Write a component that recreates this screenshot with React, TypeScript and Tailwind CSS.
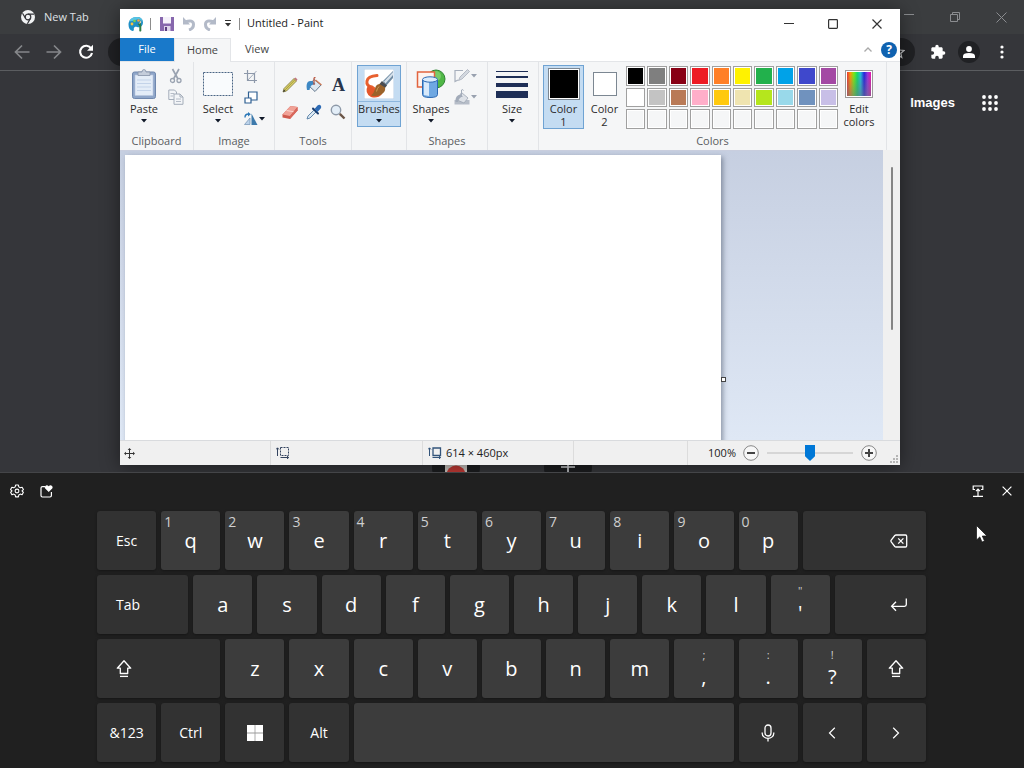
import { useState } from "react";
import type { ReactNode } from "react";

type KeyDef = {
  id: string;
  label?: ReactNode;
  hint?: string;
  top?: string;
  span?: string;
  kind?: "letter" | "fn" | "space" | "symbol";
  align?: "left" | "right";
};

const PALETTE = [
  "#000000", "#7f7f7f", "#880015", "#ed1c24", "#ff7f27", "#fff200", "#22b14c", "#00a2e8", "#3f48cc", "#a349a4",
  "#ffffff", "#c3c3c3", "#b97a57", "#ffaec9", "#ffc90e", "#efe4b0", "#b5e61d", "#99d9ea", "#7092be", "#c8bfe7",
  "", "", "", "", "", "", "", "", "", "",
];

/* ---------- small shared glyphs ---------- */

function DownArrow({ muted = false }: { muted?: boolean }) {
  return (
    <svg width="6" height="4" viewBox="0 0 6 4" className={muted ? "text-gray-400" : "text-gray-900"} aria-hidden="true">
      <path d="M0 0h6L3 3.5z" fill="currentColor" />
    </svg>
  );
}

function ShiftIcon() {
  return (
    <svg width="16" height="20" viewBox="0 0 16 20" fill="none" stroke="currentColor" strokeWidth="1.3" strokeLinejoin="round" aria-hidden="true">
      <path d="M8 1.7 1.3 9.2h3v5.3h7.4V9.2h3z" />
      <path d="M4 17.4h8" />
    </svg>
  );
}

function BackspaceIcon() {
  return (
    <svg width="18" height="14" viewBox="0 0 18 14" fill="none" stroke="currentColor" strokeWidth="1.3" strokeLinejoin="round" aria-hidden="true">
      <path d="M6 1h9.5q1.2 0 1.2 1.2v9.6q0 1.2-1.2 1.2H6q-.7 0-1.2-.5L1.2 7.8q-.6-.8 0-1.6l3.6-4.7Q5.3 1 6 1z" />
      <path d="m8.200 4.400 5.200 5.200M13.400 4.400 8.200 9.600" />
    </svg>
  );
}

function EnterIcon() {
  return (
    <svg width="18" height="14" viewBox="0 0 18 14" fill="none" stroke="currentColor" strokeWidth="1.3" aria-hidden="true">
      <path d="M16.300.5v6q0 1.800-1.800 1.800H2M6 3.800 1.600 8.300 6 12.800" />
    </svg>
  );
}

function WindowsIcon() {
  return (
    <svg width="16" height="16" viewBox="0 0 16 16" aria-hidden="true">
      <path d="M0 0h16v16H0z" fill="#9a9a9a" />
      <path d="M0 0h7.600v7.600H0zM8.400 0H16v7.600H8.400zM0 8.400h7.600V16H0zM8.400 8.400H16V16H8.400z" fill="#fff" />
    </svg>
  );
}

function MicIcon() {
  return (
    <svg width="14" height="18" viewBox="0 0 14 18" fill="none" stroke="currentColor" strokeWidth="1.3" aria-hidden="true">
      <rect x="4" y="1" width="6" height="11" rx="3" />
      <path d="M1.200 8.500v.7a5.800 5.200 0 0 0 11.600 0v-.7M7 14.400v3" />
    </svg>
  );
}

function Chevron({ flip = false }: { flip?: boolean }) {
  return (
    <svg width="8" height="12" viewBox="0 0 8 12" fill="none" stroke="currentColor" strokeWidth="1.2" aria-hidden="true">
      <path d={flip ? "M1.2.8 6.5 6l-5.3 5.2" : "M6.8.8 1.5 6l5.3 5.2"} />
    </svg>
  );
}

/* ---------- browser behind ---------- */

function ChromeLogo() {
  return (
    <svg width="14" height="14" viewBox="0 0 14 14" aria-hidden="true">
      <circle cx="7" cy="7" r="7" fill="#f1f3f4" />
      <circle cx="7" cy="7" r="2.8" fill="none" stroke="#35363a" strokeWidth="1.2" />
      <path d="M7 4.200h6.200M4.600 8.400 1.500 3.200M9.400 8.400 6.400 13.800" stroke="#35363a" strokeWidth="1.2" />
    </svg>
  );
}

function BrowserWindow() {
  return (
    <div className="flex h-full flex-col">
      <div className="flex h-[34px] shrink-0 items-center justify-between bg-[#3b3d3f]">
        <div className="flex h-full items-center gap-[9px] pl-[21px] text-[#dfe1e5]">
          <ChromeLogo />
          <span className="text-[11px]">New Tab</span>
        </div>
        <div className="flex h-[28px] items-center text-[#8b8d90]">
          <button type="button" aria-label="Minimize browser" className="flex w-[46px] justify-center">
            <svg width="10" height="10" viewBox="0 0 10 10" stroke="currentColor"><path d="M0 2.500h10" /></svg>
          </button>
          <button type="button" aria-label="Restore browser" className="flex w-[46px] justify-center">
            <svg width="10" height="10" viewBox="0 0 10 10" stroke="currentColor" fill="none"><path d="M.5 2.500h7v7h-7zM2.500 2.500v-2h7v7h-2" /></svg>
          </button>
          <button type="button" aria-label="Close browser" className="flex w-[46px] justify-center">
            <svg width="11" height="11" viewBox="0 0 11 11" stroke="currentColor"><path d="m.5.500 10 10m0-10-10 10" /></svg>
          </button>
        </div>
      </div>

      <div className="flex h-[37px] shrink-0 items-center border-b border-[#5b5d60] bg-[#35363a] px-3">
        <div className="flex items-center gap-4 pl-[2px] text-[#85878a]">
          <button type="button" aria-label="Back">
            <svg width="16" height="16" viewBox="0 0 16 16" fill="none" stroke="currentColor" strokeWidth="1.7"><path d="M15.500 8H2M8 1.500 1.500 8 8 14.500" /></svg>
          </button>
          <button type="button" aria-label="Forward">
            <svg width="16" height="16" viewBox="0 0 16 16" fill="none" stroke="currentColor" strokeWidth="1.7"><path d="M.5 8H14M8 1.500 14.500 8 8 14.500" /></svg>
          </button>
          <button type="button" aria-label="Reload" className="text-white">
            <svg width="16" height="16" viewBox="0 0 16 16" fill="none"><path d="M13.200 4.500A6 6 0 1 0 14 9" stroke="currentColor" strokeWidth="2.1" /><path d="M15 .8v6H9z" fill="currentColor" /></svg>
          </button>
        </div>
        <div className="ml-[14px] flex h-7 flex-1 items-center justify-end rounded-full bg-[#202124] pr-[10px]">
          <svg width="14" height="14" viewBox="0 0 14 14" fill="none" stroke="#c4c6c9" strokeWidth="1.2" aria-hidden="true">
            <path d="m7 1 1.800 4 4.300.4-3.300 2.900 1 4.300L7 10.300l-3.800 2.300 1-4.300L.9 5.400 5.200 5z" />
          </svg>
        </div>
        <div className="ml-[15px] flex items-center gap-3 text-white">
          <button type="button" aria-label="Extensions">
            <svg width="16" height="16" viewBox="0 0 24 24" fill="currentColor"><path d="M20.500 11H19V7c0-1.100-.9-2-2-2h-4V3.500a2.500 2.500 0 0 0-5 0V5H4c-1.100 0-2 .9-2 2v3.800h1.500a2.700 2.700 0 0 1 0 5.400H2V20c0 1.100.9 2 2 2h3.800v-1.500a2.700 2.700 0 0 1 5.400 0V22H17c1.100 0 2-.9 2-2v-4h1.500a2.500 2.500 0 0 0 0-5z" /></svg>
          </button>
          <button type="button" aria-label="Profile" className="flex size-[22px] items-center justify-center rounded-full bg-[#202124]">
            <svg width="12" height="12" viewBox="0 0 12 12" fill="currentColor"><circle cx="6" cy="3" r="2.9" /><path d="M0 12V10q0-3 6-3t6 3v2z" /></svg>
          </button>
          <button type="button" aria-label="Menu" className="flex w-5 justify-center">
            <svg width="4" height="14" viewBox="0 0 4 14" fill="currentColor"><circle cx="2" cy="2" r="1.6" /><circle cx="2" cy="7" r="1.6" /><circle cx="2" cy="12" r="1.6" /></svg>
          </button>
        </div>
      </div>

      <div className="flex min-h-0 flex-1 flex-col justify-between bg-[#35363a]">
        <div className="flex items-center justify-end gap-[27px] pr-[26px] pt-[23px] text-white">
          <a href="#images" className="font-['Liberation_Sans'] text-[13px] font-bold leading-[18px]">Images</a>
          <button type="button" aria-label="Apps">
            <svg width="16" height="16" viewBox="0 0 16 16" fill="currentColor">
              {[2, 8, 14].map((y) => [2, 8, 14].map((x) => <circle key={`${x}-${y}`} cx={x} cy={y} r="1.9" />))}
            </svg>
          </button>
        </div>
        <div className="flex h-[29px] items-start justify-center gap-16">
          <div className="flex size-12 items-center justify-center rounded-full bg-[#1c1d1f]">
            <svg width="22" height="22" viewBox="0 0 22 22" aria-hidden="true">
              <path d="M0 0h22v22H0z" fill="#c9c5c0" />
              <circle cx="11" cy="19" r="9.5" fill="#c23a35" />
              <circle cx="11" cy="20" r="4" fill="#e0805a" />
            </svg>
          </div>
          <div className="flex size-12 items-center justify-center rounded-full bg-[#1c1d1f]">
            <svg width="14" height="14" viewBox="0 0 14 14" stroke="#d5d7da" strokeWidth="1.6" aria-hidden="true"><path d="M0 7h14M7 0v14" /></svg>
          </div>
        </div>
      </div>
    </div>
  );
}

/* ---------- paint icons ---------- */

function PaintLogo() {
  return (
    <svg width="16" height="16" viewBox="0 0 16 16" aria-hidden="true">
      <path d="M9 1C4 1 .5 4.500.5 8.500.5 12 2 14.500 4.500 15c1.500.3 1.500-1.500 1.300-2.500C6 11 7.500 10.500 9 11c3 .8 6-.5 6-4.500C15 3 12.500 1 9 1z" fill="#1f8fc6" />
      <path d="M9 1C5 1 2.500 2.500 1.300 5c3 .8 5-1 7.700-1.500S13.500 4 15 6c-.3-3-2.500-5-6-5z" fill="#58c4e4" />
      <circle cx="4" cy="8" r="1.4" fill="#f6c343" />
      <circle cx="6.5" cy="5" r="1.3" fill="#7bd04b" />
      <circle cx="10.5" cy="4.5" r="1.3" fill="#f2a04b" />
      <path d="m9.500 8 3-1.500.8 3.500v5q-1 1-2 0V10z" fill="#2f7d46" />
      <path d="m10.800 8 2.300-1.200V4z" fill="#e6d5a8" />
    </svg>
  );
}

function PasteIcon() {
  return (
    <svg width="26" height="32" viewBox="0 0 26 32" aria-hidden="true">
      <rect x="1.500" y="4" width="23" height="26.500" rx="2" fill="#8fa6c9" stroke="#7088ae" />
      <path d="M4 7h18v20.500H4z" fill="#e4edf8" stroke="#b8c8de" strokeWidth=".6" />
      <path d="M6 12h14M6 15.500h14M6 19h14M6 22.500h14" stroke="#c3d3e9" />
      <path d="M7 7.500V4h4q0-2.500 2-2.500T15 4h4v3.500z" fill="#c4cddb" stroke="#8793a8" strokeWidth=".8" />
    </svg>
  );
}

function CutIcon() {
  return (
    <svg width="16" height="16" viewBox="0 0 16 16" fill="none" stroke="#9aa3b1" strokeWidth="1.3" aria-hidden="true">
      <path d="M4.500 1 10 11M11 1 5.500 11" strokeWidth="1.7" />
      <circle cx="4.500" cy="12.500" r="2" />
      <circle cx="11" cy="12.500" r="2" />
    </svg>
  );
}

function CopyIcon() {
  return (
    <svg width="16" height="16" viewBox="0 0 16 16" fill="#f3f5f8" stroke="#a4adba" aria-hidden="true">
      <path d="M.8 1h5.700l2 2v7.500H.8z" />
      <path d="M6 5h6l3 3v7.300H6zM12 5v3h3" />
      <path d="M8 10h5M8 12.500h5M2.500 4.500H6M2.500 7H5" strokeWidth=".8" />
    </svg>
  );
}

function SelectIcon() {
  return (
    <svg width="30" height="24" viewBox="0 0 30 24" aria-hidden="true">
      <rect x=".5" y=".5" width="29" height="23" fill="#f9fbfd" stroke="#4a6585" strokeDasharray="2 1" />
    </svg>
  );
}

function CropIcon() {
  return (
    <svg width="14" height="14" viewBox="0 0 14 14" fill="none" stroke="#8d98aa" strokeWidth="1.2" aria-hidden="true">
      <path d="M3.500 0v10.500H13M0 3.500h10.500V13" />
      <path d="M12.500 1 3.500 10.500" strokeWidth=".8" />
    </svg>
  );
}

function ResizeIcon() {
  return (
    <svg width="14" height="14" viewBox="0 0 14 14" fill="#fff" stroke="#2e5f92" strokeWidth="1.2" aria-hidden="true">
      <path d="M4.500 1h8.500v8H4.500z" />
      <path d="M1 7h6v5H1z" />
    </svg>
  );
}

function RotateIcon() {
  return (
    <svg width="14" height="14" viewBox="0 0 14 14" aria-hidden="true">
      <path d="M6 6v6.500H.5z" fill="#bcd3ea" stroke="#6f8fb3" strokeWidth=".7" />
      <path d="M7.500 1.500v11.500h6z" fill="#3d7aac" />
      <path d="M1 5.500Q1 2 4.500 2" fill="none" stroke="#2b78b8" strokeWidth="1.4" />
      <path d="M4 0v4.400l2.800-2.200z" fill="#2b78b8" />
    </svg>
  );
}

function PencilIcon() {
  return (
    <svg width="16" height="16" viewBox="0 0 16 16" aria-hidden="true">
      <path d="M1 15 2 11.500 12 1.500l2.500 2.500-10 10z" fill="#d8cf63" stroke="#7c7640" strokeWidth=".8" />
      <path d="m3.200 12.800 9.700-10" stroke="#a39a45" />
      <path d="m12 1.500 2.500 2.500 1-1.500-2-2z" fill="#c0777e" />
      <path d="m1 15 1-2.500 1.500 1.500z" fill="#333" />
    </svg>
  );
}

function BucketIcon() {
  return (
    <svg width="17" height="16" viewBox="0 0 17 16" aria-hidden="true">
      <path d="m8 2.500 7 5.500-6 6.500L3 9z" fill="#dfe8f1" stroke="#65798f" />
      <path d="M1 13Q-1 3 6 4l3.500 3Q4 7 3.500 13z" fill="#3d88c4" />
      <path d="M8 8V1.500Q8 .5 9.500.5" fill="none" stroke="#b8533c" strokeWidth="1.2" />
      <path d="m9.500 3 6 5" stroke="#d17b55" strokeWidth="1.3" />
    </svg>
  );
}

function EraserIcon() {
  return (
    <svg width="16" height="16" viewBox="0 0 16 16" aria-hidden="true">
      <path d="m.5 10.500 8-8.500 7 1v3.500L8 15l-7.500-1.500z" fill="#cf5a4e" />
      <path d="m.5 10.500 8-8.500 7 1-7.500 9z" fill="#f0a297" />
      <path d="m8 12 7.500-9v3.500L8 15z" fill="#d9675c" />
      <path d="m4.500 6.500 7 1.200" stroke="#fbd9d3" />
    </svg>
  );
}

function PickerIcon() {
  return (
    <svg width="16" height="16" viewBox="0 0 16 16" aria-hidden="true">
      <path d="m1 15 1-3 6-6 2 2-6 6z" fill="#dbe8f3" stroke="#567ea5" strokeWidth=".9" />
      <path d="m7 4.500 5 5" stroke="#1c3f70" strokeWidth="2" strokeLinecap="round" />
      <path d="m8.500 5 3-3.500q2-1.500 3.200 0t0 3L11.500 8z" fill="#2d6bb5" />
    </svg>
  );
}

function MagnifierIcon() {
  return (
    <svg width="16" height="16" viewBox="0 0 16 16" aria-hidden="true">
      <circle cx="6" cy="6" r="4.7" fill="#e3eef8" stroke="#8d99a8" strokeWidth="1.4" />
      <path d="m9.800 9.800 4.700 4.700" stroke="#6b5647" strokeWidth="2.4" />
    </svg>
  );
}

function BrushIcon() {
  return (
    <svg width="30" height="30" viewBox="0 0 30 30" aria-hidden="true">
      <path d="M0 0h30v30H0z" fill="#fff" stroke="#b8cfe6" />
      <path d="M13 6.500Q4 7 3 12t5 6q4 2 3 6" fill="none" stroke="#e8602f" strokeWidth="3" strokeLinecap="round" />
      <path d="M4 16q-4 8 3 12 7 2 11-3l-6-4z" fill="#e4572b" />
      <path d="m19 12 10-10v7l-7 8z" fill="#6f8ba3" />
      <path d="m20 12.500 9-9.500v3l-7.500 8.500z" fill="#d5e0ea" />
      <path d="m18 12 5 4.500-2.500 3-5.500-4z" fill="#4a4d52" />
      <path d="M15.500 15q-4 .5-4.500 5-1 4-4 6.500 7 1.500 11-1.500 4-3 3-6.500z" fill="#9b632b" />
      <path d="M15 17.500q-2 2-2.500 5" stroke="#cf9a57" fill="none" />
    </svg>
  );
}

function ShapesIcon() {
  return (
    <svg width="30" height="30" viewBox="0 0 30 30" aria-hidden="true">
      <circle cx="20" cy="10" r="9" fill="#4fb746" stroke="#2f8433" />
      <circle cx="20" cy="7" r="5" fill="#93db7f" opacity=".6" />
      <rect x="1.500" y="3" width="17" height="15" fill="#fdf3ef" stroke="#e2643f" strokeWidth="1.5" />
      <path d="M6.500 11v14.500q0 3 7.500 3t7.500-3V11z" fill="#6fa8e2" stroke="#2d69b2" />
      <path d="M8 13v13l5 1V13z" fill="#d7e9fb" />
      <ellipse cx="14" cy="10.500" rx="7.500" ry="2.700" fill="#d9ebfc" stroke="#2d69b2" />
    </svg>
  );
}

function OutlineIcon() {
  return (
    <svg width="16" height="14" viewBox="0 0 16 14" aria-hidden="true">
      <path d="M9 1.500H1v11L4 11" fill="none" stroke="#a8b0bd" strokeWidth="1.2" />
      <path d="M4.500 11.500 6 8l7.500-7.500 2 2L8 10z" fill="#d3d8df" stroke="#a0a8b5" strokeWidth=".7" />
    </svg>
  );
}

function FillIcon() {
  return (
    <svg width="16" height="16" viewBox="0 0 16 16" aria-hidden="true">
      <path d="M.5 11h15v4.500H.5z" fill="#b6bdc8" />
      <path d="m7.500 3.500 6.500 5.500-4 5-7-3z" fill="#dde1e7" stroke="#9ca5b2" strokeWidth=".8" />
      <path d="M1.500 13Q1 6 6.500 5.500L9 7.500Q5 8 4 13z" fill="#a2abb9" />
      <path d="M7.500 8V1q1.500-1 2 .5" fill="none" stroke="#a2abb9" />
    </svg>
  );
}

function SizeIcon() {
  return (
    <svg width="32" height="27" viewBox="0 0 32 27" fill="#1f2f57" aria-hidden="true">
      <path d="M0 0h32v1H0zM0 5h32v2H0zM0 12h32v4H0zM0 20h32v7H0z" />
    </svg>
  );
}

/* ---------- paint ribbon ---------- */

function RibbonGroup({ title, width, children }: { title: string; width: string; children: ReactNode }) {
  return (
    <section className={`flex shrink-0 flex-col border-r border-[#e2e4e7] pt-[3px] ${width}`}>
      <div className="flex h-[69px] pl-[2px]">{children}</div>
      <h2 className="text-center text-[11px] leading-[14px] text-[#5a5d61]">{title}</h2>
    </section>
  );
}

function BigButton({ icon, label, active = false }: { icon: ReactNode; label: string; active?: boolean }) {
  return (
    <button
      type="button"
      className={[
        "flex h-[62px] w-[44px] shrink-0 flex-col items-center border text-[11px] text-[#2b2b2b]",
        active ? "ml-[3px] border-[#6fa3d3] bg-[#c4dcf2]" : "border-transparent",
      ].join(" ")}
    >
      <span className={["flex h-9 w-full shrink-0 items-center justify-center", active ? "border-b border-[#8db6dd]" : ""].join(" ")}>{icon}</span>
      <span className="leading-[14px]">{label}</span>
      <span className="mt-[3px] flex"><DownArrow /></span>
    </button>
  );
}

function Ribbon() {
  const [slot, setSlot] = useState(1);

  return (
    <div className="flex h-[89px] shrink-0 overflow-hidden border-t border-[#e3e5e8] bg-[#f5f6f7]">
      <RibbonGroup title="Clipboard" width="w-[74px]">
        <BigButton label="Paste" icon={<PasteIcon />} />
        <div className="flex flex-col gap-[5px] pl-[2px] pt-[3px]">
          <button type="button" aria-label="Cut" className="flex"><CutIcon /></button>
          <button type="button" aria-label="Copy" className="flex"><CopyIcon /></button>
        </div>
      </RibbonGroup>

      <RibbonGroup title="Image" width="w-[81px]">
        <BigButton label="Select" icon={<SelectIcon />} />
        <div className="flex flex-col gap-[7px] pl-1 pt-[5px]">
          <button type="button" aria-label="Crop" className="flex"><CropIcon /></button>
          <button type="button" aria-label="Resize" className="flex"><ResizeIcon /></button>
          <button type="button" aria-label="Rotate" className="flex items-center gap-[1px]"><RotateIcon /><DownArrow /></button>
        </div>
      </RibbonGroup>

      <RibbonGroup title="Tools" width="w-[77px]">
        <div className="grid grid-cols-3 content-start gap-x-[7px] gap-y-[11px] pl-[5px] pt-3">
          <button type="button" aria-label="Pencil"><PencilIcon /></button>
          <button type="button" aria-label="Fill with color"><BucketIcon /></button>
          <button type="button" aria-label="Text" className="font-['Liberation_Serif'] text-[18px] font-bold leading-4 text-[#27354c]">A</button>
          <button type="button" aria-label="Eraser"><EraserIcon /></button>
          <button type="button" aria-label="Color picker"><PickerIcon /></button>
          <button type="button" aria-label="Magnifier"><MagnifierIcon /></button>
        </div>
      </RibbonGroup>

      <RibbonGroup title="" width="w-[55px]">
        <BigButton label="Brushes" icon={<BrushIcon />} active />
      </RibbonGroup>

      <RibbonGroup title="Shapes" width="w-[81px]">
        <BigButton label="Shapes" icon={<ShapesIcon />} />
        <div className="flex flex-col gap-[6px] pl-[1px] pt-1">
          <button type="button" aria-label="Outline" className="flex items-center gap-[1px]"><OutlineIcon /><DownArrow muted /></button>
          <button type="button" aria-label="Fill" className="flex items-center gap-[1px]"><FillIcon /><DownArrow muted /></button>
        </div>
      </RibbonGroup>

      <RibbonGroup title="" width="w-[51px]">
        <BigButton label="Size" icon={<SizeIcon />} />
      </RibbonGroup>

      <RibbonGroup title="Colors" width="w-[348px]">
        <div className="flex flex-1 items-start pl-[2px]">
          {[1, 2].map((n) => (
            <button
              key={n}
              type="button"
              onClick={() => setSlot(n)}
              className={[
                "flex h-16 w-[41px] shrink-0 flex-col items-center border text-[11px] leading-[13px] text-[#2b2b2b]",
                slot === n ? "border-[#6fa3d3] bg-[#c4dcf2]" : "border-transparent",
              ].join(" ")}
            >
              <span className="flex h-9 items-center justify-center">
                {n === 1 ? (
                  <span className="size-8 border border-[#7c8792] bg-white p-[1px]">
                    <span className="block h-full w-full bg-black" />
                  </span>
                ) : (
                  <span className="size-6 border border-[#7c8792] bg-white" />
                )}
              </span>
              <span>Color</span>
              <span>{n}</span>
            </button>
          ))}
          <div className="ml-[1px] mt-[1px] grid h-[63px] w-[212px] shrink-0 grid-cols-10 grid-rows-3 gap-[2px]">
            {PALETTE.map((color, i) => (
              <button
                key={i}
                type="button"
                aria-label={color || "Empty color"}
                className="border border-[#a0a0a0] bg-white p-[1px]"
              >
                <span className="block h-full w-full" style={{ backgroundColor: color || "#f5f6f7" }} />
              </button>
            ))}
          </div>
          <button type="button" className="flex w-[42px] shrink-0 flex-col items-center pt-[1px] text-[11px] leading-[13px] text-[#2b2b2b]">
            <span className="flex h-9 items-center">
              <span className="block size-7 border border-[#9a9a9a] bg-white p-[1px]">
                <span className="block h-full w-full bg-[linear-gradient(90deg,#e33,#f90,#7e1,#1d6,#2bd,#22d,#93d,#e1a)]">
                  <span className="block h-full w-full bg-linear-to-b from-transparent to-gray-500/60" />
                </span>
              </span>
            </span>
            <span>Edit</span>
            <span>colors</span>
          </button>
        </div>
      </RibbonGroup>
    </div>
  );
}

/* ---------- paint window ---------- */

function TitleBar() {
  return (
    <header className="flex h-[29px] shrink-0 items-center justify-between pl-2 pr-[1px]">
      <div className="flex items-center">
        <PaintLogo />
        <span className="ml-[6px] h-3 w-px bg-[#8c8c8c]" />
        <button type="button" aria-label="Save" className="ml-[9px]">
          <svg width="14" height="14" viewBox="0 0 14 14">
            <path d="M0 0h14v14H0z" fill="#8767ad" />
            <path d="M3 0h8v6.500H3z" fill="#f5f1fa" />
            <path d="M4 9h6.500v5H4z" fill="#ddd3ea" />
            <path d="M5 10h2v4H5z" fill="#5b3d80" />
          </svg>
        </button>
        <button type="button" aria-label="Undo" className="ml-[8px]">
          <svg width="14" height="14" viewBox="0 0 14 14" fill="none">
            <path d="M3 5q8.500-3 8.500 2.500 0 4-4.500 5.500" stroke="#b3bac8" strokeWidth="3" />
            <path d="M1 0v7.500h7z" fill="#b3bac8" />
          </svg>
        </button>
        <button type="button" aria-label="Redo" className="ml-[7px]">
          <svg width="14" height="14" viewBox="0 0 14 14" fill="none">
            <path d="M11 5Q2.500 2 2.500 7.500q0 4 4.500 5.500" stroke="#b3bac8" strokeWidth="3" />
            <path d="M13 0v7.500H6z" fill="#b3bac8" />
          </svg>
        </button>
        <button type="button" aria-label="Customize toolbar" className="ml-[8px]">
          <svg width="6" height="7" viewBox="0 0 6 7" fill="#333"><path d="M0 0h6v1H0zM0 3h6L3 6.500z" /></svg>
        </button>
        <span className="ml-[8px] h-3 w-px bg-[#8c8c8c]" />
        <h1 className="ml-[7px] text-[11px] text-[#1c1c1c]">Untitled - Paint</h1>
      </div>
      <div className="flex items-center text-[#333]">
        <button type="button" aria-label="Minimize" className="flex w-[44px] justify-center">
          <svg width="10" height="10" viewBox="0 0 10 10" stroke="currentColor"><path d="M0 4.500h10" /></svg>
        </button>
        <button type="button" aria-label="Maximize" className="flex w-[44px] justify-center">
          <svg width="10" height="10" viewBox="0 0 10 10" stroke="currentColor" fill="none" strokeWidth="1.2"><rect x=".6" y=".6" width="8.800" height="8.800" rx=".8" /></svg>
        </button>
        <button type="button" aria-label="Close" className="flex w-[44px] justify-center">
          <svg width="10" height="10" viewBox="0 0 10 10" stroke="currentColor" strokeWidth="1.2"><path d="m.5.500 9 9m0-9-9 9" /></svg>
        </button>
      </div>
    </header>
  );
}

function TabStrip() {
  return (
    <nav className="flex h-[23px] shrink-0 items-stretch text-[11px] text-[#444]">
      <button type="button" className="w-[54px] bg-[#1979ca] text-white">File</button>
      <button type="button" className="relative -mb-px w-[57px] border border-b-0 border-[#e3e5e8] bg-[#f5f6f7]">Home</button>
      <button type="button" className="w-[52px]">View</button>
      <div className="ml-auto flex items-center gap-[9px] pr-[3px]">
        <button type="button" aria-label="Collapse ribbon">
          <svg width="8" height="5" viewBox="0 0 8 5" fill="none" stroke="#a9a9a9" strokeWidth="1.3"><path d="m.5 4.500 3.500-3.500 3.500 3.500" /></svg>
        </button>
        <button type="button" aria-label="Help" className="size-4 rounded-full bg-[#0f62b0] text-[12px] font-bold leading-4 text-white">?</button>
      </div>
    </nav>
  );
}

function StatusBar() {
  const [zoom, setZoom] = useState(50);

  return (
    <footer className="flex h-[25px] shrink-0 items-stretch border-t border-[#d9dbde] bg-[#f0f0f0] text-[11px] text-[#222]">
      <div className="flex w-[151px] items-center border-r border-[#dcdcdc] pl-1">
        <svg width="11" height="11" viewBox="0 0 11 11" fill="#333" aria-hidden="true">
          <path d="M5 1h1v9H5zM1 5h9v1H1z" />
          <path d="M5.500 0 7.300 2H3.700zM5.500 11l1.800-2H3.700zM0 5.500l2-1.800v3.600zM11 5.500 9 3.700v3.600z" />
        </svg>
      </div>
      <div className="flex w-[152px] items-center border-r border-[#dcdcdc] pl-[5px]">
        <svg width="14" height="12" viewBox="0 0 14 12" fill="none" stroke="#33435e" aria-hidden="true">
          <path d="M4.500.5h8v8h-8z" strokeDasharray="2 1" />
          <path d="M1.500 9V1M0 2.500 1.500.8 3 2.500M4.500 10.500h8M11 9l1.700 1.500L11 12" />
        </svg>
      </div>
      <div className="flex w-[151px] items-center gap-1 border-r border-[#dcdcdc] pl-[5px]">
        <svg width="14" height="12" viewBox="0 0 14 12" fill="none" stroke="#33547a" aria-hidden="true">
          <path d="M5 1h7.500v7.500H5z" strokeWidth="1.3" />
          <path d="M1.500 9V1M0 2.500 1.500.8 3 2.500M4.500 10.500h8M11 9l1.700 1.500L11 12" />
        </svg>
        <span>614 × 460px</span>
      </div>
      <div className="flex-1 border-r border-[#dcdcdc]" />
      <div className="relative flex items-center pl-5 pr-[23px]">
        <span>100%</span>
        <button type="button" aria-label="Zoom out" className="ml-[7px]">
          <svg width="16" height="16" viewBox="0 0 16 16"><circle cx="8" cy="8" r="7.3" fill="#f7f7f7" stroke="#888" /><path d="M4 8h8" stroke="#444" strokeWidth="2" /></svg>
        </button>
        <input
          type="range"
          min={0}
          max={100}
          value={zoom}
          aria-label="Zoom"
          onChange={(e) => setZoom(Number(e.target.value))}
          className="mx-[8px] h-4 w-[86px] appearance-none bg-[linear-gradient(#d6d6d6,#d6d6d6)] bg-[length:100%_2px] bg-center bg-no-repeat [&::-webkit-slider-thumb]:h-4 [&::-webkit-slider-thumb]:w-[10px] [&::-webkit-slider-thumb]:appearance-none [&::-webkit-slider-thumb]:bg-[#0078d7] [&::-webkit-slider-thumb]:[clip-path:polygon(0_0,100%_0,100%_70%,50%_100%,0_70%)]"
        />
        <button type="button" aria-label="Zoom in">
          <svg width="16" height="16" viewBox="0 0 16 16"><circle cx="8" cy="8" r="7.3" fill="#f7f7f7" stroke="#888" /><path d="M4 8h8M8 4v8" stroke="#444" strokeWidth="2" /></svg>
        </button>
        <svg width="8" height="8" viewBox="0 0 8 8" fill="#b5b5b5" className="absolute bottom-[2px] right-[2px]" aria-hidden="true">
          <path d="M6 0h2v2H6zM3 3h2v2H3zM6 3h2v2H6zM0 6h2v2H0zM3 6h2v2H3zM6 6h2v2H6z" />
        </svg>
      </div>
    </footer>
  );
}

function PaintWindow() {
  return (
    <div className="absolute bottom-[7px] left-[120px] right-[124px] top-[9px] flex flex-col bg-white shadow-[0_2px_18px_rgba(0,0,0,0.45)]">
      <TitleBar />
      <TabStrip />
      <Ribbon />
      <div className="flex min-h-0 flex-1">
        <div className="min-w-0 flex-1 overflow-hidden border-t border-[#c9cede] bg-linear-to-b from-[#c6cfe1] to-[#dfe8f5] pl-[5px] pt-1">
          <div className="relative h-[448px] w-[596px] bg-white shadow-[2px_2px_5px_rgba(70,80,100,0.55)]">
            <span className="absolute -right-[5px] top-1/2 size-[5px] -translate-y-[2px] border border-[#444] bg-white" />
          </div>
        </div>
        <div className="flex w-[17px] justify-center bg-[#f0f0f0] pt-[17px]">
          <div className="h-[163px] w-[2px] rounded-full bg-[#858585]" />
        </div>
      </div>
      <StatusBar />
    </div>
  );
}

/* ---------- touch keyboard ---------- */

const KEYS: KeyDef[] = [
  { id: "Esc", label: "Esc", kind: "fn" },
  ..."qwertyuiop".split("").map((c, i) => ({ id: c, label: c, hint: String((i + 1) % 10) })),
  { id: "Backspace", label: <BackspaceIcon />, kind: "fn", span: "col-span-4", align: "right" },
  { id: "Tab", label: "Tab", kind: "fn", span: "col-span-3", align: "left" },
  ..."asdfghjkl".split("").map((c) => ({ id: c, label: c })),
  { id: "quote", label: "'", top: '"', kind: "symbol" },
  { id: "Enter", label: <EnterIcon />, kind: "fn", span: "col-span-3", align: "right" },
  { id: "Left shift", label: <ShiftIcon />, kind: "fn", span: "col-span-4", align: "left" },
  ..."zxcvbnm".split("").map((c) => ({ id: c, label: c })),
  { id: "comma", label: ",", top: ";", kind: "symbol" },
  { id: "period", label: ".", top: ":", kind: "symbol" },
  { id: "question", label: "?", top: "!", kind: "symbol" },
  { id: "Right shift", label: <ShiftIcon />, kind: "fn" },
  { id: "Symbols", label: "&123", kind: "fn" },
  { id: "Ctrl", label: "Ctrl", kind: "fn" },
  { id: "Windows", label: <WindowsIcon />, kind: "fn" },
  { id: "Alt", label: "Alt", kind: "fn" },
  { id: "Space", kind: "space", span: "col-span-12" },
  { id: "Microphone", label: <MicIcon />, kind: "fn" },
  { id: "Left", label: <Chevron />, kind: "fn" },
  { id: "Right", label: <Chevron flip />, kind: "fn" },
];

function Key({ def }: { def: KeyDef }) {
  const { label, hint, top, span = "col-span-2", kind = "letter", align } = def;
  return (
    <button
      type="button"
      aria-label={def.id}
      className={[
        "relative flex items-center rounded-[3px] text-white shadow-[0_1px_3px_rgba(0,0,0,0.35)]",
        span,
        kind === "fn" ? "bg-[#323232] text-sm" : "bg-[#3c3c3c] text-[20px] leading-6",
        align === "left" ? "justify-start pl-[19px]" : align === "right" ? "justify-end pr-[18px]" : "justify-center",
      ].join(" ")}
    >
      {hint ? <span className="absolute left-[3px] top-[2px] text-sm leading-[18px] text-[#cfcfcf]">{hint}</span> : null}
      {top ? (
        <span className="flex h-full flex-col items-center pt-2">
          <span className="text-[11px] leading-4 text-[#cfcfcf]">{top}</span>
          <span className="pt-[2px]">{label}</span>
        </span>
      ) : (
        label
      )}
    </button>
  );
}

function TouchKeyboard() {
  return (
    <div className="shrink-0 border-t border-[#444548] bg-[#202020] pb-[6px]">
      <div className="flex h-[38px] items-center justify-between px-[10px] pb-[2px] text-white">
        <div className="flex items-center gap-4">
          <button type="button" aria-label="Keyboard settings">
            <svg width="14" height="14" viewBox="0 0 14 14" fill="none" stroke="currentColor" strokeWidth="1.1" strokeLinejoin="round">
              <path d="m5.600 1-.4 1.900-1.500.9-1.800-.6L.6 5.600 2 6.900.6 8.300l1.300 2.400 1.800-.6 1.500.9.4 1.900h2.800l.4-1.900 1.500-.9 1.800.6 1.300-2.400L12 6.900l1.400-1.300-1.300-2.400-1.800.6-1.500-.9L8.400 1z" />
              <circle cx="7" cy="7" r="1.9" />
            </svg>
          </button>
          <button type="button" aria-label="Emoji and stickers">
            <svg width="13" height="13" viewBox="0 0 13 13" fill="none">
              <path d="M5 1.600H2.400Q1 1.600 1 3v7.600Q1 12 2.400 12H10q1.400 0 1.400-1.400V7" stroke="currentColor" strokeWidth="1.2" />
              <path d="M8.700 7 5.200 3.600Q4.400 2.400 5.200 1.200q1.600-1.700 3.500 0 1.900-1.700 3.500 0 .8 1.200 0 2.400z" fill="currentColor" />
            </svg>
          </button>
        </div>
        <div className="flex items-center gap-[18px] pr-[2px]">
          <button type="button" aria-label="Dock keyboard">
            <svg width="12" height="12" viewBox="0 0 12 12" fill="none" stroke="currentColor" strokeWidth="1.2">
              <path d="M3 4.500H1.200V1h9.600v3.500H9M1 11.300h10M6 11V4.500M4 6.200l2-2 2 2" />
            </svg>
          </button>
          <button type="button" aria-label="Close keyboard">
            <svg width="10" height="10" viewBox="0 0 10 10" stroke="currentColor" strokeWidth="1.2"><path d="m.6.600 8.800 8.800m0-8.800L.6 9.400" /></svg>
          </button>
        </div>
      </div>
      <div className="ml-[97px] mr-[98px] grid auto-rows-[59px] grid-cols-[repeat(26,minmax(0,1fr))] gap-[5px]">
        {KEYS.map((k) => (
          <Key key={k.id} def={k} />
        ))}
      </div>
    </div>
  );
}

export default function App() {
  return (
    <div className="relative flex h-screen flex-col overflow-hidden bg-[#202020] font-['Open_Sans','Noto_Sans',sans-serif]">
      <main className="relative min-h-0 flex-1 overflow-hidden">
        <BrowserWindow />
        <PaintWindow />
      </main>
      <TouchKeyboard />
      <svg width="12" height="18" viewBox="0 0 12 18" className="pointer-events-none absolute left-[976px] top-[525px]" aria-hidden="true">
        <path d="M.5.500v14.500l3.300-3.100 2.200 5.200 2.500-1L6.300 11H11z" fill="#fff" stroke="#111" strokeWidth=".7" />
      </svg>
    </div>
  );
}
